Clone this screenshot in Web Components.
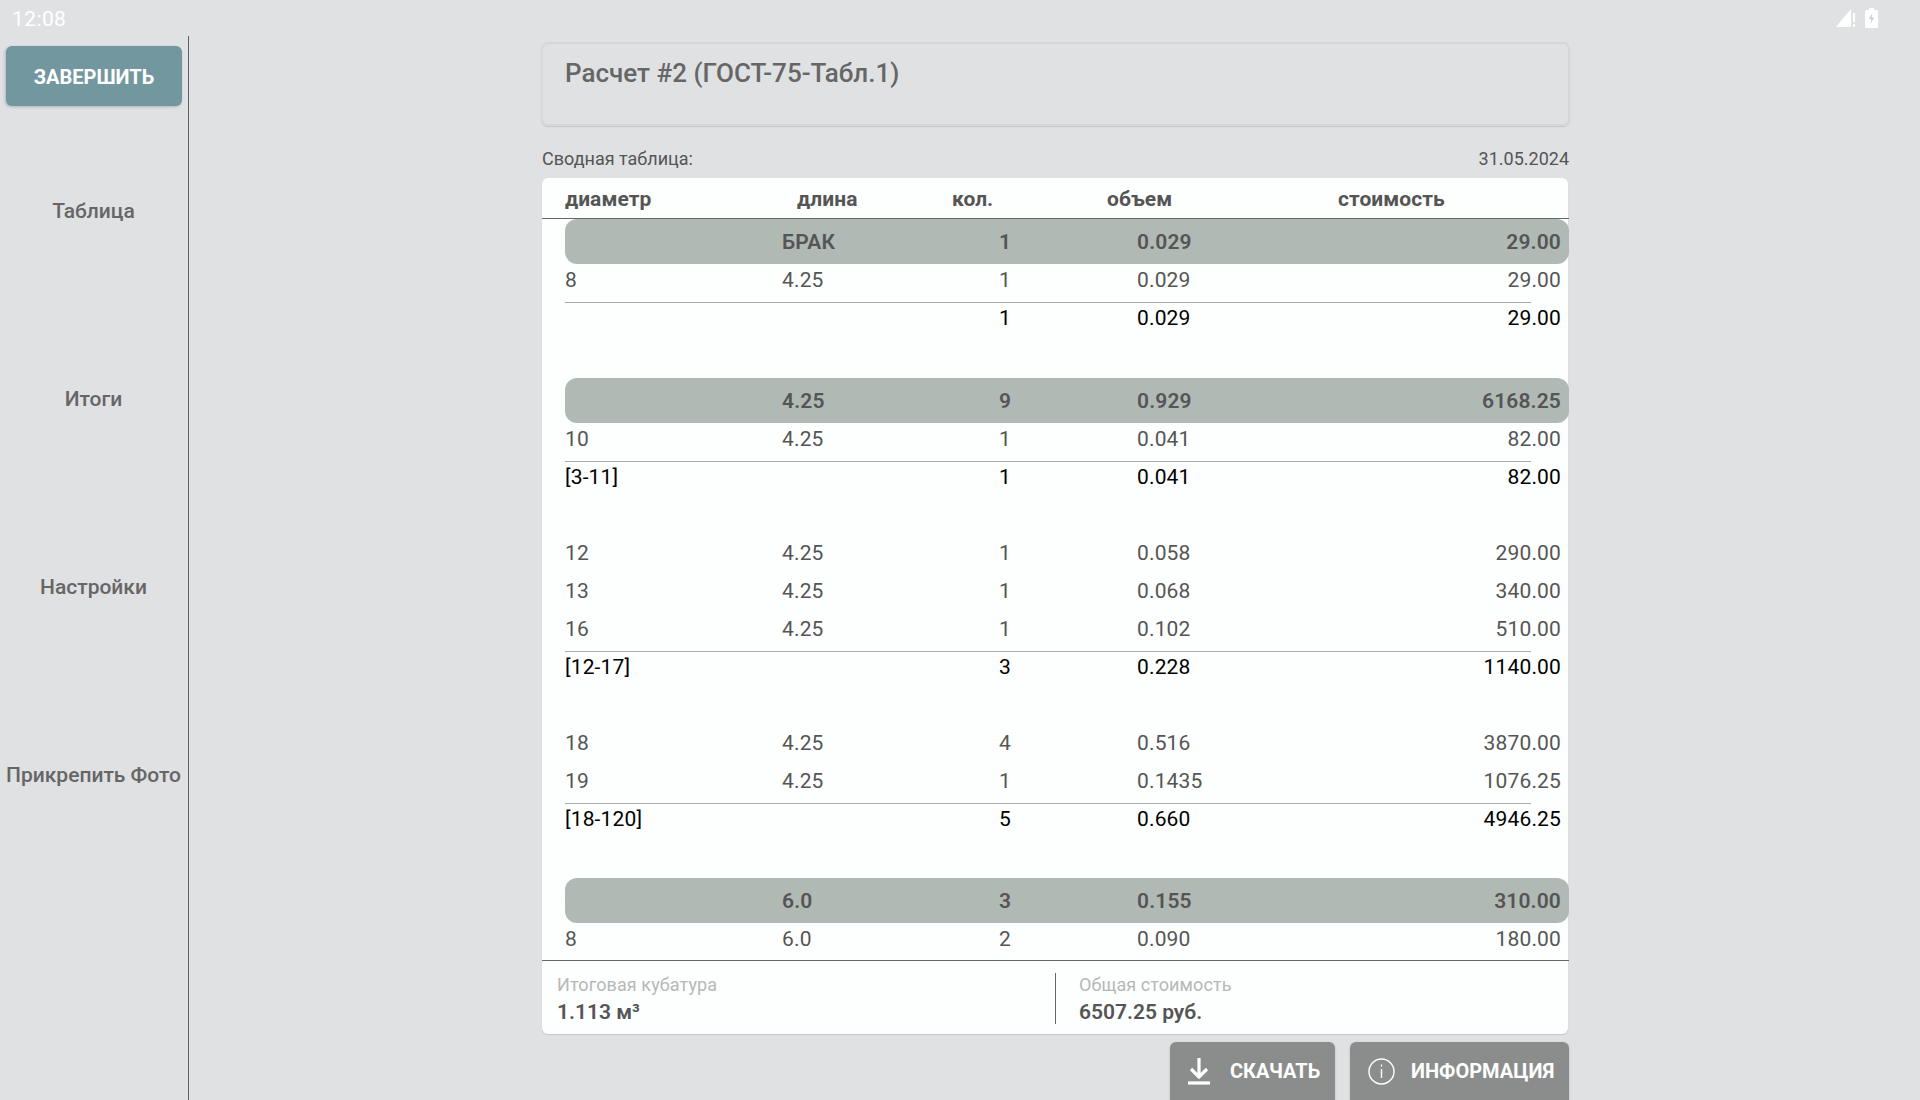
<!DOCTYPE html>
<html lang="ru"><head><meta charset="utf-8"><title>Расчет</title>
<style>
html,body{margin:0;height:1100px;overflow:hidden;background:#dfe1e3;font-family:Roboto,"Liberation Sans",sans-serif}
</style></head><body>
<app-shell>
  <status-bar slot="status"></status-bar>
  <side-nav slot="nav"></side-nav>
  <title-card slot="main">Расчет #2 (ГОСТ-75-Табл.1)</title-card>
  <caption-row slot="main"></caption-row>
  <summary-table slot="main"></summary-table>
  <action-bar slot="main"></action-bar>
</app-shell>
<script>
const el=(name,html)=>customElements.define(name,class extends HTMLElement{constructor(){super();this.attachShadow({mode:'open'}).innerHTML=html;}});
el('app-shell',`<style>:host{display:flex;flex-direction:column;width:1920px;height:1100px;overflow:hidden}
.body{display:flex;flex:1;min-height:0}
main{display:flex;flex-direction:column;margin-left:352px;width:1029px;padding-top:6px}</style>
<slot name="status"></slot><div class="body"><slot name="nav"></slot><main><slot name="main"></slot></main></div>`);
el('status-bar',`<style>:host{display:flex;align-items:center;justify-content:space-between;height:36px;flex:none;padding:1px 42px 0 12px;color:#fff;font-size:21px;letter-spacing:.4px;box-sizing:border-box}
.ic{display:flex;gap:9px;align-items:center;margin-top:-1px}</style>
<span>12:08</span><span class="ic">
<svg width="20" height="20" viewBox="0 0 20 20"><path d="M0 19 L15 1 V19Z" fill="#fff"/><path d="M17 5h2v9h-2zM17 16h2v3h-2z" fill="#fff"/></svg>
<svg width="13" height="20" viewBox="0 0 13 20"><path d="M4 0h5v2h3a1 1 0 0 1 1 1v16a1 1 0 0 1-1 1H1a1 1 0 0 1-1-1V3a1 1 0 0 1 1-1h3z" fill="#fff"/><path d="M7.5 5 4 11h2.5l-1 5L9 9.5H6.5z" fill="#c9cccf"/></svg>
</span>`);
el('side-nav',`<style>:host{display:flex;flex-direction:column;align-items:center;width:188px;border-right:1px solid #5f6163;color:#666;font-size:21px;font-weight:500;flex:none}
button{all:unset;display:flex;align-items:center;justify-content:center;width:176px;height:60px;box-sizing:border-box;padding-top:1px;margin-top:10px;background:#73979f;border-radius:6px;color:#fff;font-weight:700;font-size:20px;box-shadow:-1px 1px 3px rgba(0,0,0,.2);flex:none}
a{display:flex;align-items:center;justify-content:center;height:188px;width:100%;padding-right:1px;box-sizing:border-box;white-space:nowrap;flex:none}
.first{margin-top:11px}</style>
<button>ЗАВЕРШИТЬ</button><a class="first">Таблица</a><a>Итоги</a><a>Настройки</a><a>Прикрепить Фото</a>`);
el('title-card',`<style>:host{display:block;height:84px;flex:none;box-sizing:border-box;border:2px solid #d5d7d9;border-radius:7px;box-shadow:0 1px 1px rgba(0,0,0,.12);padding:13px 22px;font-size:26px;font-weight:500;color:#666;line-height:32px}</style><slot></slot>`);
el('caption-row',`<style>:host{display:flex;justify-content:space-between;height:52px;flex:none;align-items:center;padding:12px 1px 0;font-size:18px;color:#555;box-sizing:border-box}</style><span>Сводная таблица:</span><span>31.05.2024</span>`);
const cols='grid-template-columns:217px 217px 138px 1fr 200px';
const rows=[
['b','','БРАК','1','0.029','29.00'],['r','8','4.25','1','0.029','29.00'],['t','','','1','0.029','29.00'],['g',42],
['b','','4.25','9','0.929','6168.25'],['r','10','4.25','1','0.041','82.00'],['t','[3-11]','','1','0.041','82.00'],['g',38],
['r','12','4.25','1','0.058','290.00'],['r','13','4.25','1','0.068','340.00'],['r','16','4.25','1','0.102','510.00'],['t','[12-17]','','3','0.228','1140.00'],['g',38],
['r','18','4.25','4','0.516','3870.00'],['r','19','4.25','1','0.1435','1076.25'],['t','[18-120]','','5','0.660','4946.25'],['g',41],
['b','','6.0','3','0.155','310.00'],['r','8','6.0','2','0.090','180.00']];
const cells=r=>r.slice(1).map((c,i)=>`<span${i==4?' class="end"':''}>${c}</span>`).join('');
const rowsHtml=rows.map(r=>r[0]=='g'?`<div style="height:${r[1]}px"></div>`:`<div class="${r[0]=='b'?'band':r[0]=='t'?'total':'row'}">${cells(r)}</div>`).join('');
el('summary-table',`<style>:host{display:flex;flex-direction:column;width:1026px;margin-left:1px;height:856px;background:#fdfefe;border-radius:6px;box-shadow:0 1px 1px rgba(0,0,0,.12);color:#555;font-size:21px;letter-spacing:.15px;flex:none}
.head{display:grid;grid-template-columns:232px 155px 155px 231px 1fr;align-items:center;height:40px;box-sizing:content-box;padding:0 0 0 23px;font-weight:700;font-size:21px;letter-spacing:.05px;flex:none;border-bottom:1px solid #666;width:1004px}
.head span{position:relative;top:1px}
.body{height:741px;overflow:hidden;flex:none;border-bottom:1px solid #666;width:1027px}
.band,.row,.total{display:grid;${cols};align-items:center;margin-left:23px;box-sizing:border-box;padding-top:1px}
.band{height:45px;background:#b1b9b5;border-radius:12px;font-weight:600;margin-bottom:-4px;position:relative;padding-right:8px}
.row{height:38px;margin-right:8px}
.total{height:30px;margin:4px 8px 4px 23px;color:#000;position:relative}
.total::before{content:"";position:absolute;width:966px;height:1px;background:#a9abab;top:0;left:0}
.end{text-align:right}
.foot{display:flex;height:74px;flex:none}
.f{display:flex;flex-direction:column;justify-content:flex-start;gap:5px;margin-top:13px;letter-spacing:0}
.f1{width:498px;padding-left:15px;margin:12px 0 11px;padding-top:1px;border-right:1px solid #666}
.f2{padding-left:23px}
small{font-size:18px;color:#b5b8b8;line-height:21px;letter-spacing:.1px}
b{font-weight:600;line-height:24px;font-size:21px;color:#555}
</style>
<div class="head"><span>диаметр</span><span>длина</span><span>кол.</span><span>объем</span><span>стоимость</span></div>
<div class="body">${rowsHtml}</div>
<div class="foot"><div class="f f1"><small>Итоговая кубатура</small><b>1.113 м³</b></div><div class="f f2"><small>Общая стоимость</small><b>6507.25 руб.</b></div></div>`);
el('action-bar',`<style>:host{display:flex;justify-content:flex-end;gap:15px;margin-top:8px;width:1028px;flex:none}
button{all:unset;display:flex;align-items:center;height:70px;padding-bottom:12px;box-sizing:border-box;background:#8a8d8b;border-radius:6px;color:#fff;font-weight:700;font-size:20px;box-shadow:0 1px 3px rgba(0,0,0,.15)}
.d{width:165px;padding-left:18px;gap:20px}.i{width:219px;padding-left:18px;gap:16px}</style>
<button class="d"><svg width="22" height="28" viewBox="0 0 22 28" fill="none" stroke="#fff" stroke-width="3.2"><path d="M11 1v18M3 12l8 8 8-8"/><path d="M0 26h22"/></svg><span>СКАЧАТЬ</span></button>
<button class="i"><svg width="27" height="27" viewBox="0 0 27 27" fill="none" stroke="#fff" stroke-width="1.4"><circle cx="13.5" cy="13.5" r="12.5"/><path d="M13.5 11v9M13.5 6.5v2"/></svg><span>ИНФОРМАЦИЯ</span></button>`);
</script>
</body></html>
